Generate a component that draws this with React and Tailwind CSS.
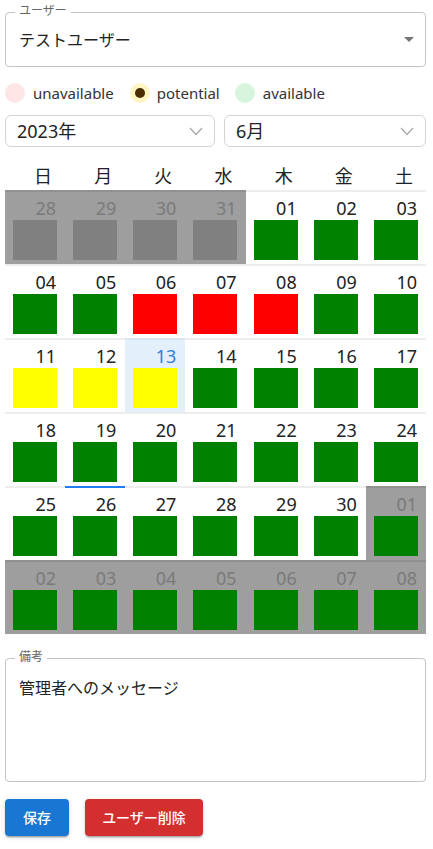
import React from 'react';

const WEEKDAYS = ['日', '月', '火', '水', '木', '金', '土'];

const COLORS = {
  g: 'bg-[#008000]',
  r: 'bg-[#ff0000]',
  y: 'bg-[#ffff00]',
  x: 'bg-[#808080]',
};

// d: day label, s: status color key, o: outside current month
const WEEKS = [
  [['28', 'x', 1], ['29', 'x', 1], ['30', 'x', 1], ['31', 'x', 1], ['01', 'g'], ['02', 'g'], ['03', 'g']],
  [['04', 'g'], ['05', 'g'], ['06', 'r'], ['07', 'r'], ['08', 'r'], ['09', 'g'], ['10', 'g']],
  [['11', 'y'], ['12', 'y'], ['13', 'y', 0, 'today'], ['14', 'g'], ['15', 'g'], ['16', 'g'], ['17', 'g']],
  [['18', 'g'], ['19', 'g', 0, 'hover'], ['20', 'g'], ['21', 'g'], ['22', 'g'], ['23', 'g'], ['24', 'g']],
  [['25', 'g'], ['26', 'g'], ['27', 'g'], ['28', 'g'], ['29', 'g'], ['30', 'g'], ['01', 'g', 1]],
  [['02', 'g', 1], ['03', 'g', 1], ['04', 'g', 1], ['05', 'g', 1], ['06', 'g', 1], ['07', 'g', 1], ['08', 'g', 1]],
];

function Chevron() {
  return (
    <svg width="14" height="9" viewBox="0 0 14 9" className="shrink-0">
      <polyline points="1,1 7,7.5 13,1" fill="none" stroke="#a8a8a8" strokeWidth="1.2" />
    </svg>
  );
}

function DayCell({ day }) {
  const [label, color, outside, state] = day;
  let bg = 'bg-white border-black/[0.07]';
  let text = 'text-[#222]';
  if (outside) {
    bg = 'bg-[#9e9e9e] border-black/[0.08]';
    text = 'text-[#7a7a7a]';
  } else if (state === 'today') {
    bg = 'bg-[#e3f0fc] border-black/[0.04]';
    text = 'text-[#2f7de1]';
  }
  return (
    <div className={`relative h-[74px] border-t-2 pt-[5px] ${bg}`}>
      <div className={`text-right pr-[9px] text-[18px] leading-[22px] ${text}`}>{label}</div>
      <div className={`mx-auto mt-[1px] h-[40px] w-[44px] ${COLORS[color]}`} />
      {state === 'hover' && (
        <div className="absolute left-0 right-0 bottom-[-2px] h-[2px] bg-[#1f7cf2] z-10" />
      )}
    </div>
  );
}

export default function App() {
  return (
    <div className="w-[433px] min-h-[849px] bg-white pl-[5px] pr-[7px] pt-[12px] font-['Noto_Sans','Noto_Sans_CJK_JP',sans-serif] text-[#222]">
      {/* User select */}
      <div className="relative h-[55px] rounded-[4px] border border-[#c4c4c4]">
        <span className="absolute top-[-10px] left-[9px] bg-white px-[4px] text-[12px] leading-[16px] text-[#666]">ユーザー</span>
        <div className="flex h-full items-center pl-[13px] text-[16px] text-[#222]">テストユーザー</div>
        <svg width="24" height="24" viewBox="0 0 24 24" className="absolute right-[4px] top-[14px]">
          <path d="M7 10l5 5 5-5z" fill="#757575" />
        </svg>
      </div>

      {/* Legend */}
      <div className="mt-[16px] flex h-[20px] items-center text-[15px] text-[#333]">
        <span className="h-[20px] w-[20px] rounded-full bg-[#ffe6e6]" />
        <span className="ml-[8px]">unavailable</span>
        <span className="ml-[16px] flex h-[20px] w-[20px] items-center justify-center rounded-full bg-[#fff5c4]">
          <span className="h-[10px] w-[10px] rounded-full bg-[#4a2c00]" />
        </span>
        <span className="ml-[7px]">potential</span>
        <span className="ml-[15px] h-[20px] w-[20px] rounded-full bg-[#d7f5dc]" />
        <span className="ml-[8px]">available</span>
      </div>

      {/* Year / month */}
      <div className="mt-[12px] flex gap-[9px]">
        <div className="flex h-[32px] w-[210px] items-center justify-between rounded-[6px] border border-[#d4d4d4] pl-[11px] pr-[11px]">
          <span className="text-[18px] text-[#222]">2023年</span>
          <Chevron />
        </div>
        <div className="flex h-[32px] flex-1 items-center justify-between rounded-[6px] border border-[#d4d4d4] pl-[11px] pr-[11px]">
          <span className="text-[18px] text-[#222]">6月</span>
          <Chevron />
        </div>
      </div>

      {/* Weekday header */}
      <div className="mt-[13px] grid h-[30px] grid-cols-7 pt-[3px] text-[18px] leading-[27px] text-[#222]">
        {WEEKDAYS.map((w) => (
          <div key={w} className="pl-[16px] text-center">{w}</div>
        ))}
      </div>

      {/* Calendar */}
      <div>
        {WEEKS.map((week, i) => (
          <div key={i} className="grid grid-cols-7">
            {week.map((day, j) => (
              <DayCell key={j} day={day} />
            ))}
          </div>
        ))}
      </div>

      {/* Notes */}
      <div className="relative mt-[24px] h-[124px] rounded-[4px] border border-[#c4c4c4]">
        <span className="absolute top-[-10px] left-[9px] bg-white px-[4px] text-[12px] leading-[16px] text-[#666]">備考</span>
        <div className="pl-[13px] pt-[17px] text-[16px] leading-[24px] text-[#222]">管理者へのメッセージ</div>
      </div>

      {/* Actions */}
      <div className="mt-[17px] flex gap-[16px]">
        <button className="h-[37px] w-[64px] rounded-[4px] bg-[#1976d2] text-[14px] font-medium text-white shadow-[0_3px_1px_-2px_rgba(0,0,0,0.2),0_2px_2px_0_rgba(0,0,0,0.14),0_1px_5px_0_rgba(0,0,0,0.12)]">
          保存
        </button>
        <button className="h-[37px] w-[118px] rounded-[4px] bg-[#d32f2f] text-[14px] font-medium text-white shadow-[0_3px_1px_-2px_rgba(0,0,0,0.2),0_2px_2px_0_rgba(0,0,0,0.14),0_1px_5px_0_rgba(0,0,0,0.12)]">
          ユーザー削除
        </button>
      </div>
    </div>
  );
}
